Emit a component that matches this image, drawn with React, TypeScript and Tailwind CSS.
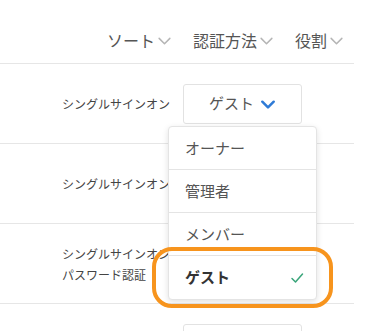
import React from 'react';

const font = { fontFamily: '"Noto Sans CJK JP", "Noto Sans", sans-serif' };

const Chevron = ({ className }: { className?: string }) => (
  <svg viewBox="0 0 14 14" className={className} fill="none" stroke="currentColor" strokeLinecap="round" strokeLinejoin="round">
    <path d="M2 5l5 5 5-5" />
  </svg>
);

const rows = [
  { lines: ['シングルサインオン'], role: 'ゲスト' },
  { lines: ['シングルサインオン'], role: '' },
  { lines: ['シングルサインオン', 'パスワード認証'], role: '' },
  { lines: [], role: '' },
];

const options = ['オーナー', '管理者', 'メンバー', 'ゲスト'];

export default function App() {
  return (
    <div className="relative w-[368px] h-[331px] overflow-hidden bg-white" style={font}>
      <div className="w-[354px]">
        {/* filter header */}
        <div className="h-[64px] flex items-end justify-end pb-[11px] pr-[10px] gap-[21px] border-b border-[#e6e6e6] text-[16px] leading-[24px] text-[#555]">
          {['ソート', '認証方法', '役割'].map((label) => (
            <div key={label} className="flex items-center">
              <span>{label}</span>
              <Chevron className="w-[15px] h-[15px] ml-[2px] text-[#b5b5b5] stroke-[1.4]" />
            </div>
          ))}
        </div>

        {rows.map((row, i) => (
          <div key={i} className="h-[80px] flex items-center border-b border-[#e6e6e6]">
            <div className="w-[183px] pl-[62px] text-[12px] leading-[21px] text-[#444] whitespace-nowrap">
              {row.lines.map((l) => (
                <div key={l}>{l}</div>
              ))}
            </div>
            <div className="w-[119px] h-[40px] flex items-center justify-center border border-[#e2e2e2] rounded-[3px] text-[15px] text-[#555]">
              {row.role && <span>{row.role}</span>}
              {row.role && <Chevron className="w-[16px] h-[16px] ml-[6px] text-[#2f7bd6] stroke-[2.2]" />}
            </div>
          </div>
        ))}
      </div>

      {/* role dropdown */}
      <div className="absolute left-[168px] top-[126px] w-[149px] bg-white border border-[#e4e4e4] rounded-[4px] shadow-[0_2px_6px_rgba(0,0,0,0.12)] text-[15px]">
        {options.map((opt, i) => (
          <div
            key={opt}
            className={`h-[43px] flex items-center justify-between pl-[16px] pr-[12px] ${i < options.length - 1 ? 'border-b border-[#e4e4e4]' : ''} ${opt === 'ゲスト' ? 'font-bold text-[#333]' : 'text-[#555]'}`}
          >
            <span>{opt}</span>
            {opt === 'ゲスト' && (
              <svg viewBox="0 0 14 14" className="w-[14px] h-[14px] text-[#3aa57a]" fill="none" stroke="currentColor" strokeWidth={1.5} strokeLinecap="round" strokeLinejoin="round">
                <path d="M2 7.5l3.5 3.5L12.5 3" />
              </svg>
            )}
          </div>
        ))}
      </div>

      {/* highlight ring */}
      <div className="absolute left-[152px] top-[247px] w-[181px] h-[61px] border-[4px] border-[#f7941d] rounded-[20px]" />
    </div>
  );
}
